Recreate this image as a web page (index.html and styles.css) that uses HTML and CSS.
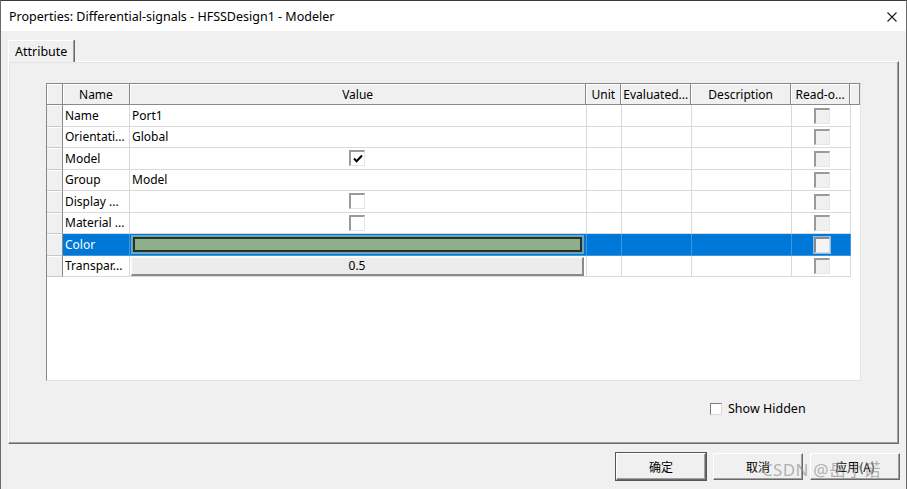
FILE: index.html
```html
<!DOCTYPE html>
<html>
<head>
<meta charset="utf-8">
<link rel="stylesheet" href="styles.css">
</head>
<body>
<div class="window">
  <div class="titlebar">
    <span class="title">Properties: Differential-signals - HFSSDesign1 - Modeler</span>
    <svg class="close" width="10" height="10" viewBox="0 0 10 10"><path d="M0.5 0.5 L9.5 9.5 M9.5 0.5 L0.5 9.5" stroke="#1a1a1a" stroke-width="1.1" fill="none"/></svg>
  </div>
  <div class="client">
    <div class="tabs"><div class="tab">Attribute</div></div>
    <div class="panel">
      <div class="grid">
        <div class="row hdr">
          <div class="c rh"></div>
          <div class="c name">Name</div>
          <div class="c value">Value</div>
          <div class="c unit">Unit</div>
          <div class="c eval">Evaluated...</div>
          <div class="c desc">Description</div>
          <div class="c ro">Read-o...</div>
          <div class="c fill"></div>
        </div>
        <div class="row">
          <div class="c rh"></div><div class="c name">Name</div><div class="c value">Port1</div>
          <div class="c unit"></div><div class="c eval"></div><div class="c desc"></div>
          <div class="c ro"><span class="cb dis"></span></div>
        </div>
        <div class="row">
          <div class="c rh"></div><div class="c name">Orientati...</div><div class="c value">Global</div>
          <div class="c unit"></div><div class="c eval"></div><div class="c desc"></div>
          <div class="c ro"><span class="cb dis"></span></div>
        </div>
        <div class="row">
          <div class="c rh"></div><div class="c name">Model</div>
          <div class="c value center"><span class="cb"><svg width="12" height="12" viewBox="0 0 12 12"><path d="M2 5.5 L4.6 8.2 L10 2.5" stroke="#000" stroke-width="2" fill="none"/></svg></span></div>
          <div class="c unit"></div><div class="c eval"></div><div class="c desc"></div>
          <div class="c ro"><span class="cb dis"></span></div>
        </div>
        <div class="row">
          <div class="c rh"></div><div class="c name">Group</div><div class="c value">Model</div>
          <div class="c unit"></div><div class="c eval"></div><div class="c desc"></div>
          <div class="c ro"><span class="cb dis"></span></div>
        </div>
        <div class="row">
          <div class="c rh"></div><div class="c name">Display ...</div>
          <div class="c value center"><span class="cb"></span></div>
          <div class="c unit"></div><div class="c eval"></div><div class="c desc"></div>
          <div class="c ro"><span class="cb dis"></span></div>
        </div>
        <div class="row">
          <div class="c rh"></div><div class="c name">Material ...</div>
          <div class="c value center"><span class="cb"></span></div>
          <div class="c unit"></div><div class="c eval"></div><div class="c desc"></div>
          <div class="c ro"><span class="cb dis"></span></div>
        </div>
        <div class="row sel">
          <div class="c rh"></div><div class="c name">Color</div>
          <div class="c value swcell"><div class="swatch"><div class="swatch-in"></div></div></div>
          <div class="c unit"></div><div class="c eval"></div><div class="c desc"></div>
          <div class="c ro"><span class="cb selcb"></span></div>
        </div>
        <div class="row">
          <div class="c rh"></div><div class="c name">Transpar...</div>
          <div class="c value btncell"><div class="valbtn">0.5</div></div>
          <div class="c unit"></div><div class="c eval"></div><div class="c desc"></div>
          <div class="c ro"><span class="cb dis"></span></div>
        </div>
      </div>
      <div class="options">
        <label class="show"><span class="sbox"></span>Show Hidden</label>
      </div>
    </div>
    <div class="buttons">
      <div class="btn default">确定</div>
      <div class="btn">取消</div>
      <div class="btn">应用(A)</div>
    </div>
  </div>
  <div class="watermark">CSDN @岳小诺</div>
</div>
</body>
</html>
```
FILE: styles.css
```css
* { box-sizing: border-box; }
html, body { margin: 0; padding: 0; }
body {
  width: 907px;
  height: 489px;
  overflow: hidden;
  background: #f0f0f0;
  font-family: "Noto Sans", "Noto Sans CJK SC", sans-serif;
  font-size: 12px;
  color: #000;
}
.window {
  position: relative;
  height: 489px;
  border-left: 1px solid #6a6a6a;
  border-right: 1px solid #6a6a6a;
  border-top: 1px solid #3c3c3c;
  background: #f0f0f0;
}
.titlebar {
  height: 30px;
  background: #fff;
  display: flex;
  align-items: center;
  justify-content: space-between;
  padding: 0 9px 0 8px;
}
.title { font-size: 12.5px; color: #000; }
.close { display: block; margin-top: 2px; }
.client { padding: 9px 7px 0 7px; }
.tabs { display: flex; height: 21px; position: relative; z-index: 1; }
.tab {
  width: 66px;
  height: 22px;
  background: #f0f0f0;
  border-top: 1px solid #fff;
  border-left: 1px solid #fff;
  border-right: 1px solid #a0a0a0;
  box-shadow: 1px 0 0 #696969;
  padding: 2px 0 0 6px;
  font-size: 12.5px;
}
.panel {
  height: 383px;
  border-top: 1px solid #fff;
  border-left: 1px solid #fff;
  border-right: 1px solid #696969;
  border-bottom: 1px solid #696969;
  box-shadow: inset -1px -1px 0 #a0a0a0, inset 1px 1px 0 #e3e3e3;
  padding: 21px 0 0 37px;
}
.grid {
  width: 815px;
  height: 298px;
  background: #fff;
  border-top: 1px solid #8a8a8a;
  border-left: 1px solid #8a8a8a;
  border-right: 1px solid #e3e3e3;
  border-bottom: 1px solid #e3e3e3;
}
.row { display: flex; height: 21.5px; }
.row.hdr { height: 21px; }
.c {
  height: 100%;
  border-right: 1px solid #d9d9d9;
  border-bottom: 1px solid #d9d9d9;
  padding-left: 2px;
  white-space: nowrap;
  overflow: hidden;
  display: flex;
  align-items: center;
}
.rh { width: 16px; background: #f0f0f0; border-right: 1px solid #8a8a8a; border-bottom: 1px solid #c8c8c8; box-shadow: inset 0 1px 0 #fff; }
.name { width: 67px; }
.value { width: 457px; }
.unit { width: 35px; }
.eval { width: 70px; }
.desc { width: 100px; }
.ro { width: 59px; justify-content: center; padding-left: 0; }
.fill { width: 10px; }
.hdr .c {
  background: #f0f0f0;
  border-right: 1px solid #8a8a8a;
  border-bottom: 1px solid #8a8a8a;
  box-shadow: inset 1px 1px 0 #fff;
  justify-content: center;
  padding-left: 0;
  padding-top: 1px;
}
.center { justify-content: center; padding-left: 0; }
.value.center { padding-right: 2px; }
.cb {
  width: 16px;
  height: 16px;
  background: #fff;
  border-style: solid;
  border-width: 2px 1px 1px 2px;
  border-color: #9a9a9a #e6e6e6 #e6e6e6 #9a9a9a;
  display: flex;
  align-items: center;
  justify-content: center;
}
.cb.dis { background: #f0f0f0; }
.ro .cb { margin-left: 1px; margin-top: 1px; }
.sel .c { background: #0078d7; color: #fff; border-right-color: #3d98e0; border-bottom-color: #3d98e0; }
.sel .rh { background: #f0f0f0; border-right-color: #8a8a8a; border-bottom-color: #c8c8c8; }
.cb.selcb { background: #f4f4f4; outline: 1px solid #8ec0ec; border-color: #8a8a8a #d8d8d8 #d8d8d8 #8a8a8a; }
.swcell { padding: 1px 2px 1px 1px; }
.swatch {
  width: 100%;
  height: 19px;
  border: 1px solid #66a6de;
  padding: 1px;
  background: #7fa57c;
}
.swatch-in {
  width: 100%;
  height: 100%;
  background: #8fae8b;
  border: 2px solid #22332e;
}
.btncell { padding: 1px 2px 0 1px; }
.valbtn {
  width: 100%;
  height: 19px;
  background: #ececec;
  border-style: solid;
  border-width: 1px 2px 2px 1px;
  border-color: #fafafa #8a8a8a #8a8a8a #fafafa;
  display: flex;
  align-items: center;
  justify-content: center;
}
.options { padding: 19px 0 0 664px; }
.show { display: flex; align-items: center; gap: 6px; font-size: 12.5px; }
.sbox {
  width: 12px;
  height: 12px;
  background: #fff;
  border-style: solid;
  border-width: 1px;
  border-color: #7a7a7a #d8d8d8 #d8d8d8 #7a7a7a;
}
.buttons {
  display: flex;
  justify-content: flex-end;
  gap: 7px;
  padding: 9px 0 0 0;
  margin-right: -1px;
}
.btn {
  width: 90px;
  height: 27px;
  background: #f0f0f0;
  border: 1px solid;
  border-color: #fff #696969 #696969 #fff;
  box-shadow: inset -1px -1px 0 #a0a0a0;
  display: flex;
  align-items: center;
  justify-content: center;
  font-family: "Noto Sans CJK SC", sans-serif;
  font-size: 12px;
}
.btn.default { outline: 1px solid #555; }
.watermark {
  position: absolute;
  left: 761px;
  top: 455px;
  font-family: "Noto Sans", "Noto Sans CJK SC", sans-serif;
  font-size: 17px;
  color: rgba(140, 140, 140, 0.65);
  letter-spacing: 0.3px;
  pointer-events: none;
}
```
